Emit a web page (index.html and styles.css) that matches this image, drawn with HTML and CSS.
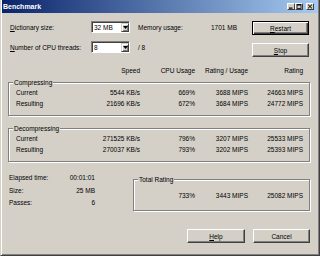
FILE: index.html
```html
<!DOCTYPE html>
<html>
<head>
<meta charset="utf-8">
<title>Benchmark</title>
<link rel="stylesheet" href="styles.css">
</head>
<body>
<div class="window">
  <div class="titlebar">
    <span class="title">Benchmark</span>
    <div class="caption-buttons">
      <span class="cap-btn"><svg width="6" height="5" viewBox="0 0 6 5"><rect x="1" y="3.5" width="3.5" height="1.2" fill="#000"/></svg></span>
      <span class="cap-btn"><svg width="6" height="5" viewBox="0 0 6 5"><rect x="1" y="0.5" width="4" height="4" fill="none" stroke="#000" stroke-width="0.8"/><rect x="1" y="0.5" width="4" height="1" fill="#000"/></svg></span>
      <span class="cap-btn close"><svg width="6" height="5" viewBox="0 0 6 5"><path d="M1 0.6 L5 4.4 M5 0.6 L1 4.4" stroke="#000" stroke-width="1"/></svg></span>
    </div>
  </div>
  <div class="client">
    <div class="top">
      <div class="settings">
        <span class="lbl"><u>D</u>ictionary size:</span>
        <div class="combo"><span class="combo-text">32 MB</span><span class="combo-btn"><svg width="5" height="3" viewBox="0 0 5 3"><path d="M0 0 H5 L2.5 3 Z" fill="#000"/></svg></span></div>
        <span></span>
        <div class="mem"><span>Memory usage:</span><span>1701 MB</span></div>
        <span class="lbl"><u>N</u>umber of CPU threads:</span>
        <div class="combo"><span class="combo-text">8</span><span class="combo-btn"><svg width="5" height="3" viewBox="0 0 5 3"><path d="M0 0 H5 L2.5 3 Z" fill="#000"/></svg></span></div>
        <span></span>
        <div class="mem"><span>/ 8</span></div>
      </div>
      <div class="buttons">
        <button class="btn default"><span><u>R</u>estart</span></button>
        <button class="btn"><span><u>S</u>top</span></button>
      </div>
    </div>

    <div class="row header"><span></span><span>Speed</span><span>CPU Usage</span><span>Rating / Usage</span><span>Rating</span></div>

    <fieldset class="group first">
      <legend>Compressing</legend>
      <div class="group-body">
        <div class="row"><span>Current</span><span>5544 KB/s</span><span>669%</span><span>3688 MIPS</span><span>24663 MIPS</span></div>
        <div class="row"><span>Resulting</span><span>21696 KB/s</span><span>672%</span><span>3684 MIPS</span><span>24772 MIPS</span></div>
      </div>
    </fieldset>

    <fieldset class="group second">
      <legend>Decompressing</legend>
      <div class="group-body">
        <div class="row"><span>Current</span><span>271525 KB/s</span><span>796%</span><span>3207 MIPS</span><span>25533 MIPS</span></div>
        <div class="row"><span>Resulting</span><span>270037 KB/s</span><span>793%</span><span>3202 MIPS</span><span>25393 MIPS</span></div>
      </div>
    </fieldset>

    <div class="bottom">
      <div class="stats">
        <span>Elapsed time:</span><span class="val">00:01:01</span>
        <span>Size:</span><span class="val">25 MB</span>
        <span>Passes:</span><span class="val">6</span>
      </div>
      <fieldset class="group total">
        <legend>Total Rating</legend>
        <div class="group-body">
          <div class="row"><span></span><span>733%</span><span>3443 MIPS</span><span>25082 MIPS</span></div>
        </div>
      </fieldset>
    </div>

    <div class="footer">
      <button class="btn help"><span><u>H</u>elp</span></button>
      <button class="btn"><span>Cancel</span></button>
    </div>
  </div>
</div>
</body>
</html>
```

FILE: styles.css
```css
* { box-sizing: border-box; }
html, body { margin: 0; padding: 0; }
body {
  width: 320px;
  height: 256px;
  overflow: hidden;
  background: #d4d0c8;
  font-family: "Liberation Sans", Arial, sans-serif;
  font-size: 6.5px;
  color: #000;
}
.window {
  width: 320px;
  height: 256px;
  background: #d4d0c8;
  border-left: 1px solid #d4d0c8;
  border-right: 1px solid #404040;
  border-bottom: 1px solid #404040;
  box-shadow: inset 1px 0 #ffffff, inset -1px -1px #808080;
  padding: 0 1px 1px 1px;
  display: flex;
  flex-direction: column;
}
.titlebar {
  height: 13px;
  flex: none;
  background: linear-gradient(to right, #0a246a, #a6caf0);
  display: flex;
  align-items: center;
  padding: 0 4px 0 1px;
}
.title {
  flex: 1;
  color: #fff;
  font-weight: bold;
  font-size: 7px;
}
.caption-buttons { display: flex; }
.cap-btn {
  width: 8px;
  height: 7px;
  background: #d4d0c8;
  border: 1px solid;
  border-color: #ffffff #404040 #404040 #ffffff;
  display: flex;
  align-items: center;
  justify-content: center;
}
.cap-btn svg { display: block; }
.cap-btn.close { margin-left: 3px; }

.client {
  flex: 1;
  display: flex;
  flex-direction: column;
  padding: 0 8px 0 6px;
}
.top {
  display: flex;
  margin-top: 8px;
}
.settings {
  display: grid;
  grid-template-columns: 81px 39px 8px 99px;
  grid-template-rows: 12px 12px;
  row-gap: 8px;
  padding-left: 2px;
  align-items: center;
  white-space: nowrap;
}
.mem {
  display: flex;
  justify-content: space-between;
}
.combo {
  height: 12px;
  display: flex;
  background: #fff;
  border: 1px solid;
  border-color: #808080 #ffffff #ffffff #808080;
  box-shadow: inset 1px 1px #404040;
  padding: 1px 0 0 1px;
}
.combo-text {
  flex: 1;
  padding-left: 1px;
  line-height: 10px;
}
.combo-btn {
  width: 8px;
  height: 9px;
  background: #d4d0c8;
  border: 1px solid;
  border-color: #d4d0c8 #404040 #404040 #d4d0c8;
  box-shadow: inset 1px 1px #ffffff, inset -1px -1px #808080;
  display: flex;
  align-items: center;
  justify-content: center;
}
.combo-btn svg { display: block; }

.buttons {
  margin-left: auto;
  margin-right: 1px;
  display: flex;
  flex-direction: column;
  gap: 8px;
}
.btn {
  width: 57px;
  height: 14px;
  padding: 0;
  margin: 0;
  font: inherit;
  color: #000;
  background: #d4d0c8;
  border: 1px solid;
  border-color: #ffffff #404040 #404040 #ffffff;
  box-shadow: inset -1px -1px #808080;
  display: flex;
  align-items: center;
  justify-content: center;
}
.btn.default {
  border-color: #000;
  box-shadow: inset 1px 1px #ffffff, inset -1px -1px #404040, inset -2px -2px #808080;
}
.btn.help { width: 58px; }

.row {
  display: grid;
  grid-template-columns: 64px 60px 55px 53px 55px;
  height: 10.5px;
  line-height: 10.5px;
  white-space: nowrap;
}
.row > span:not(:first-child) { text-align: right; }
.header {
  margin-top: 9px;
  padding-left: 8px;
  height: 10px;
  line-height: 10px;
}

fieldset.group {
  margin: 0;
  padding: 0;
  min-width: 0;
  border: 1px solid #808080;
  box-shadow: 1px 1px #ffffff, inset 1px 1px #ffffff;
}
fieldset.group legend {
  padding: 0 1px;
  margin-left: 4px;
  line-height: 9px;
  background: #d4d0c8;
}
.group-body { padding: 1px 0 6px 7px; }
.group.first { margin-top: 2px; }
.group.second { margin-top: 8px; }

.bottom {
  display: flex;
  align-items: flex-start;
  margin-top: 10px;
}
.stats {
  width: 87px;
  padding-left: 1px;
  display: grid;
  grid-template-columns: 44px 42px;
  grid-auto-rows: 12.5px;
  line-height: 12.5px;
  white-space: nowrap;
}
.stats .val { text-align: right; }
fieldset.total {
  width: 177px;
  margin-left: auto;
  margin-top: 2.5px;
}
.total .group-body { padding: 7.5px 6px 9px 0; }
.total .row {
  grid-template-columns: 1fr 55px 53px 55px;
  height: 10px;
  line-height: 10px;
}
.total .row > span:first-child { text-align: left; }

.footer {
  display: flex;
  justify-content: flex-end;
  gap: 8px;
  margin-top: 18px;
}
```
